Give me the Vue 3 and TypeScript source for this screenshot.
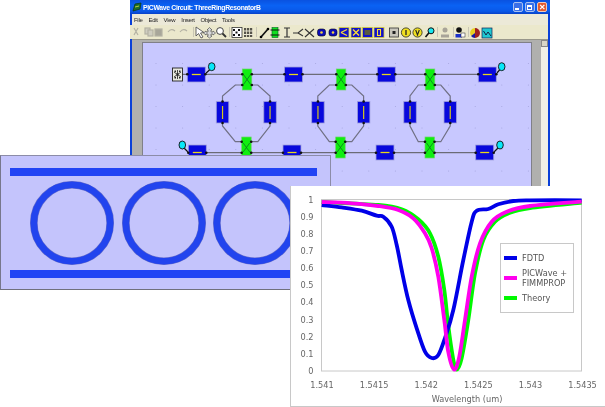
<template>
  <div class="scene">
    <!-- schematic editor window -->
    <section class="window">
      <header class="titlebar">
        <svg class="app-icon" viewBox="0 0 10 10" width="10" height="10">
          <path d="M1 9 L3 2 L9 1 L8 7 Z" fill="#1c6b2c" stroke="#0b3a18" stroke-width=".8" />
          <path d="M3 5 L7 4" stroke="#b8d040" stroke-width="1" />
        </svg>
        <span class="title">PICWave Circuit: ThreeRingResonatorB</span>
        <span class="caption-btns">
          <i class="cap"><b class="cap-min"></b></i>
          <i class="cap"><b class="cap-max"></b></i>
          <i class="cap close">
            <svg viewBox="0 0 10 10" width="10" height="10"><path d="M2.5 2.5 L7.5 7.5 M7.5 2.5 L2.5 7.5" stroke="#fff" stroke-width="1.5" /></svg>
          </i>
        </span>
      </header>
      <nav class="menubar">
        <span v-for="m in menus" :key="m" class="menu-item">{{ m }}</span>
      </nav>
      <div class="toolbar">
        <svg viewBox="130 24 420 14" width="420" height="14">
          <g fill="none" stroke="#b4b2a4" stroke-width="1.2">
            <path d="M134 27 L138 34 M138 27 L134 34" />
            <rect x="145" y="27" width="5" height="6" fill="#cfcdc0" />
            <rect x="148" y="29" width="5" height="6" fill="#cfcdc0" />
            <rect x="155" y="28" width="7" height="7" fill="#a8a69a" />
            <path d="M168 31 Q171 27 175 30 M187 30 Q183 27 180 31" />
          </g>
          <g stroke="#c9c6b4" stroke-width="1">
            <path d="M193.500 26 V36 M229.500 26 V36 M256.500 26 V36 M437.500 26 V36 M453.500 26 V36 M468.500 26 V36" />
          </g>
          <path d="M196 26 L196 35 L198.500 32.500 L201 37 L203 36 L200.500 32 L204 31.500 Z" fill="#fff" stroke="#555" stroke-width=".9" />
          <path d="M209.500 26.500 L212 29 H211 V31 H213 V30 L215.500 32 L213 34 V33 H211 V35 H212 L209.500 37 L207 35 H208 V33 H206 V34 L203.500 32 L206 30 V31 H208 V29 H207 Z" fill="#d8d8d8" stroke="#555" stroke-width=".7" />
          <circle cx="220" cy="30" r="3.400" fill="#fff" stroke="#444" />
          <path d="M222.500 32.500 L226 36" stroke="#333" stroke-width="1.800" />
          <rect x="232" y="26.500" width="10" height="10" fill="#fff" stroke="#333" stroke-width=".8" />
          <path d="M233 28 h2 v2 h-2z M238 28 h2 v2 h-2z M235.500 30.500 h2 v2 h-2z M233 33 h2 v2 h-2z M238 33 h2 v2 h-2z" fill="#111" />
          <g fill="#55534a">
            <rect x="244" y="27" width="2.200" height="9" />
            <rect x="247" y="27" width="2.200" height="9" />
            <rect x="250" y="27" width="2.200" height="9" />
            <rect x="244" y="29.500" width="9" height="1" fill="#ece9d8" />
            <rect x="244" y="33" width="9" height="1" fill="#ece9d8" />
          </g>
          <path d="M261 36 L268 28" stroke="#111" stroke-width="1.600" />
          <circle cx="261" cy="36" r="1.300" /><circle cx="268" cy="28" r="1.300" />
          <rect x="272" y="26.500" width="6" height="10" fill="#10e020" stroke="#062" stroke-width=".6" />
          <path d="M270.500 29 h9 M270.500 34 h9" stroke="#111" />
          <path d="M284 27 H290 M287 27 V36 M284 36 H290" stroke="#333" stroke-width="1.200" fill="none" />
          <path d="M293 32 H298 L303 28 M298 32 L303 35" stroke="#333" stroke-width="1.100" fill="none" />
          <path d="M305 28 L314 36 M314 28 L305 36" stroke="#333" stroke-width="1.100" />
          <g v-for="x in [321.500, 333]" :key="x">
            <rect :x="x - 4" y="28" width="8" height="7" rx="2.500" fill="#0c0cb8" stroke="#001" stroke-width=".6" />
            <circle :cx="x" cy="31.500" r="1.300" fill="#f2d040" />
          </g>
          <g v-for="(x, i) in [344, 356, 367.500, 379]" :key="x">
            <rect :x="x - 5" y="26.500" width="10" height="10" fill="#1212c8" stroke="#d8d038" stroke-width=".8" />
            <path v-if="i === 0" :d="`M${x - 3} 31.500 L${x + 3} 28.500 M${x - 3} 31.500 L${x + 3} 34.500`" stroke="#ffe030" stroke-width="1.300" />
            <path v-if="i === 1" :d="`M${x - 3} 28.500 L${x + 3} 34.500 M${x + 3} 28.500 L${x - 3} 34.500`" stroke="#ffe030" stroke-width="1.300" />
            <rect v-if="i === 2" :x="x - 3" y="29" width="6" height="5" fill="#5a5a40" />
            <rect v-if="i === 3" :x="x - 1.500" y="28.500" width="3" height="6" fill="none" stroke="#ffe030" stroke-width="1.100" />
          </g>
          <rect x="389.500" y="27" width="9" height="9" fill="#c8c6bc" stroke="#333" stroke-width=".8" />
          <rect x="392.500" y="30" width="3" height="3" fill="#222" />
          <g v-for="(x, i) in [406, 417.500]" :key="x">
            <circle :cx="x" cy="31.500" r="4.600" fill="#f0e020" stroke="#222" stroke-width=".8" />
            <path v-if="i === 0" :d="`M${x} 29 V34`" stroke="#222" stroke-width="1.300" />
            <path v-else :d="`M${x - 1.800} 29 L${x} 34 L${x + 1.800} 29`" stroke="#222" stroke-width="1.100" fill="none" />
          </g>
          <circle cx="431" cy="29.800" r="3" fill="#18e8f0" stroke="#111" />
          <path d="M428.800 32 L425.500 36" stroke="#111" stroke-width="1.600" />
          <circle cx="445" cy="29" r="2.500" fill="#a8a498" />
          <path d="M441 36.500 V33.500 H449 V36.500 Z" fill="#a8a498" />
          <circle cx="459" cy="29" r="2.800" fill="#111" />
          <path d="M455.500 36.500 V33 H462 V36.500 Z" fill="#1a30c8" />
          <rect x="461" y="32" width="4" height="4" fill="#fff" stroke="#222" stroke-width=".5" />
          <path d="M475 27 A5 5 0 0 1 475 37 Z" fill="#a02020" />
          <path d="M475 27 A5 5 0 0 0 471 35 L475 32 Z" fill="#e8d020" />
          <path d="M475 37 A5 5 0 0 1 471 35 L475 32 Z" fill="#1818a0" />
          <rect x="482" y="27" width="10" height="10" fill="#20c8d0" stroke="#125" stroke-width=".7" />
          <path d="M483.500 30 L486 34 L488 31 L491 35" stroke="#124" fill="none" />
        </svg>
      </div>
      <div class="workspace">
        <div class="canvas-frame">
          <svg class="schematic" viewBox="143 42 388 150" width="388" height="150">
            <circle v-for="(d, i) in gridDots" :key="'g' + i" :cx="d.x" :cy="d.y" r=".5" fill="#a2a2da" />
            <g fill="none" stroke="#555" stroke-width="1">
              <path d="M182 73.300 H478.500" />
              <path d="M205 151.700 H476" />
            </g>
            <g fill="none" stroke="#707084" stroke-width="1.200">
              <path v-for="(r, i) in ringPaths" :key="'r' + i" :d="r" />
            </g>
            <path d="M205 73 L210 68.500 M496 73 L500 68.500 M188 151 L184 147 M494 151 L498 147" stroke="#111" stroke-width="1.200" />
            <g>
              <rect x="172.500" y="67" width="10" height="13" fill="#e8e8e0" stroke="#222" stroke-width=".9" />
              <path d="M177.500 69 V78 M174 71 L181 76 M181 71 L174 76" stroke="#444" stroke-width="1" />
              <path d="M174.500 69.500 h1.500 v1.500 h-1.500z M179 69.500 h1.500 v1.500 h-1.500z M176.500 72.500 h2 v2 h-2z M174.500 76 h1.500 v1.500 h-1.500z M179 76 h1.500 v1.500 h-1.500z" fill="#222" />
            </g>
            <g v-for="(b, i) in hBoxes" :key="'h' + i">
              <rect :x="b.x" :y="b.y" width="18" height="15" fill="#0808dc" stroke="#a0a0dc" stroke-width=".8" />
              <path :d="`M${b.x + 4.5} ${b.y + 7.500} H${b.x + 13.5}`" stroke="#e8d818" stroke-width="1.300" />
              <circle :cx="b.x" :cy="b.wire" r="1.300" fill="#111" />
              <circle :cx="b.x + 18" :cy="b.wire" r="1.300" fill="#111" />
            </g>
            <g v-for="(b, i) in vBoxes" :key="'v' + i">
              <rect :x="b" y="100.500" width="12.500" height="21.500" fill="#0808dc" stroke="#a0a0dc" stroke-width=".8" />
              <path :d="`M${b + 6.250} 105 V118`" stroke="#d8c818" stroke-width="1.200" />
              <circle :cx="b + 6.250" cy="100.500" r="1.300" fill="#111" />
              <circle :cx="b + 6.250" cy="122" r="1.300" fill="#111" />
            </g>
            <g v-for="(c, i) in couplers" :key="'c' + i">
              <rect :x="c.x" :y="c.y" width="9.500" height="21" fill="#10ee10" stroke="#70d070" stroke-width=".7" />
              <path :d="`M${c.x + 1.500} ${c.y + 6} L${c.x + 8} ${c.y + 15} M${c.x + 8} ${c.y + 6} L${c.x + 1.500} ${c.y + 15}`" stroke="#0a7a20" stroke-width=".8" />
              <circle v-for="d in c.dots" :key="d.x + '-' + d.y" :cx="d.x" :cy="d.y" r="1.300" fill="#111" />
            </g>
            <ellipse v-for="(o, i) in bulbs" :key="'o' + i" :cx="o.x" :cy="o.y" rx="3.300" ry="4" fill="#08e8f8" stroke="#111" stroke-width=".9" />
          </svg>
        </div>
        <div class="scrollbar"><span class="scroll-btn"></span></div>
      </div>
    </section>

    <!-- ring layout -->
    <section class="rings">
      <div class="rail"></div>
      <div class="ring-row">
        <svg v-for="n in 3" :key="n" class="ring" viewBox="0 0 84 84" width="84" height="84">
          <circle cx="42" cy="42" r="38.200" fill="none" stroke="#6a70c8" stroke-width="7.600" />
          <circle cx="42" cy="42" r="38.200" fill="none" stroke="#2244ee" stroke-width="6.600" />
        </svg>
      </div>
      <div class="rail"></div>
    </section>

    <!-- spectrum chart -->
    <section class="chart">
      <svg viewBox="290 186 315 221" width="315" height="221">
        <rect x="321.500" y="199.500" width="260" height="171.500" fill="#fff" stroke="#c8c8c8" />
        <g class="axis-text">
          <text v-for="t in yTicks" :key="t.label" x="313.500" :y="t.y + 3" text-anchor="end">{{ t.label }}</text>
          <text v-for="t in xTicks" :key="t.label" :x="t.x" y="388" text-anchor="middle">{{ t.label }}</text>
          <text x="467" y="402" text-anchor="middle">Wavelength (um)</text>
        </g>
        <g fill="none" stroke-width="3.800" stroke-linejoin="round">
          <path :d="theoryPath" stroke="#00f800" />
          <path :d="fdtdPath" stroke="#0000e8" />
          <path :d="picPath" stroke="#ff00ee" />
        </g>
      </svg>
      <div class="legend">
        <div class="legend-row"><i class="swatch blue"></i><span>FDTD</span></div>
        <div class="legend-row"><i class="swatch pink"></i><span>PICWave +<br />FIMMPROP</span></div>
        <div class="legend-row"><i class="swatch green"></i><span>Theory</span></div>
      </div>
    </section>
  </div>
</template>

<script setup lang="ts">
type Pt = [number, number]

const menus = ['File', 'Edit', 'View', 'Insert', 'Object', 'Tools']

// smooth line through hand-read curve points
const smooth = (p: Pt[]): string => {
  let d = `M${p[0][0]} ${p[0][1]}`
  for (let i = 0; i < p.length - 1; i++) {
    const a = p[Math.max(i - 1, 0)]
    const b = p[i]
    const c = p[i + 1]
    const e = p[Math.min(i + 2, p.length - 1)]
    const c1x = b[0] + (c[0] - a[0]) / 6
    const c1y = b[1] + (c[1] - a[1]) / 6
    const c2x = c[0] - (e[0] - b[0]) / 6
    const c2y = c[1] - (e[1] - b[1]) / 6
    d += ` C${c1x.toFixed(1)} ${c1y.toFixed(1)} ${c2x.toFixed(1)} ${c2y.toFixed(1)} ${c[0]} ${c[1]}`
  }
  return d
}

const fdtdPath = smooth([
  [321.7, 205], [341.7, 207.3], [361.7, 210.7], [376.7, 215.7], [383.3, 216.7], [391.7, 226.7],
  [396.7, 245], [401.7, 270], [408.3, 300], [416.7, 328.3], [425, 351.7], [431.7, 358],
  [438.3, 355], [445, 338], [453.3, 310], [463.3, 260], [471.7, 221.7], [476.7, 210.7],
  [488.3, 209], [498.3, 204.3], [513.3, 201], [530, 200.3], [581.7, 200.3],
])

const picPath = smooth([
  [321.7, 202], [351.7, 203.3], [378.3, 206], [398.3, 210], [413.3, 218.3], [425, 233.3],
  [431.7, 248.3], [438.3, 276.7], [444.3, 320], [448.3, 352], [454, 369.5], [459.3, 356.7],
  [465, 320], [471.7, 276.7], [480, 243.3], [491.7, 221.7], [506.7, 211.7], [530, 206], [581.7, 201.7],
])

const theoryPath = smooth([
  [321.7, 202], [378.3, 205], [401.7, 209.3], [418.3, 219.3], [430, 233.3], [438.3, 256.7],
  [444.3, 290], [448, 323.3], [453, 358], [456.7, 369.5], [461.7, 358], [468.3, 320],
  [475, 273.3], [483.3, 240], [495, 221.7], [510, 212.7], [530, 208], [581.7, 202.7],
])

const yTicks = Array.from({ length: 11 }, (_, i) => ({
  label: i === 0 ? '0' : i === 10 ? '1' : (i / 10).toFixed(1),
  y: 371 - i * 17.15,
}))

const xTicks = ['1.541', '1.5415', '1.542', '1.5425', '1.543', '1.5435'].map((label, i) => ({
  label,
  x: 322 + i * 52.1,
}))

const hBoxes = [
  { x: 187.3, y: 66, wire: 73.3 }, { x: 284.5, y: 66, wire: 73.3 },
  { x: 377.3, y: 66, wire: 73.3 }, { x: 478.3, y: 66, wire: 73.3 },
  { x: 188.3, y: 144, wire: 151.7 }, { x: 283, y: 144, wire: 151.7 },
  { x: 376, y: 144, wire: 151.7 }, { x: 475.7, y: 144, wire: 151.7 },
]

const vBoxes = [216.3, 263.8, 311.7, 357.4, 403.8, 444]

const makeCoupler = (x: number, y: number, wireTop: boolean) => ({
  x,
  y,
  dots: wireTop
    ? [{ x, y: 73.3 }, { x: x + 9.5, y: 73.3 }, { x, y: 84 }, { x: x + 9.5, y: 84 }]
    : [{ x, y: 140.7 }, { x: x + 9.5, y: 140.7 }, { x, y: 151.7 }, { x: x + 9.5, y: 151.7 }],
})

const couplers = [
  makeCoupler(242.3, 68, true), makeCoupler(336.3, 68, true), makeCoupler(425.3, 68, true),
  makeCoupler(241.7, 136, false), makeCoupler(335.7, 136, false), makeCoupler(425, 136, false),
]

// octagon of each ring, between its top and bottom coupler
const ringPaths = [
  [242.3, 251.8, 222.5, 270],
  [336.3, 345.8, 317.8, 363.6],
  [425.3, 434.8, 410, 450.2],
].flatMap(([l, r, a, b]) => [
  `M${l} 84 H${l - 7} L${a} 95 V100 M${r} 84 H${r + 6} L${b} 95 V100`,
  `M${a} 122 V125 L${l - 7} 140.7 H${l} M${b} 122 V125 L${r + 6} 140.7 H${r}`,
])

const bulbs = [
  { x: 211.7, y: 65.7 }, { x: 501.7, y: 65.7 },
  { x: 182.3, y: 144 }, { x: 500, y: 144 },
]

const gridDots: { x: number; y: number }[] = []
for (let x = 156; x < 531; x += 26.6) {
  for (let y = 62.5; y < 190; y += 21.5) {
    gridDots.push({ x, y })
  }
}
</script>

<style>
html,
body {
  background: #fff;
}
</style>

<style scoped>
.scene {
  position: relative;
  width: 605px;
  height: 407px;
  overflow: hidden;
  background: #fff;
  font-family: 'DejaVu Sans', sans-serif;
}

/* windows on the desktop */
.window {
  position: absolute;
  left: 130px;
  top: 0;
  width: 420px;
  height: 190px;
  display: flex;
  flex-direction: column;
  box-sizing: border-box;
  border-left: 2px solid #0a40d8;
  border-right: 2px solid #0a40d8;
  background: #ece9d8;
  filter: blur(0.3px);
}

.titlebar {
  height: 14px;
  margin: 0 -2px;
  padding: 0 3px 0 2px;
  display: flex;
  align-items: center;
  gap: 1px;
  background: linear-gradient(#0a52e0, #0a62f4 40%, #0a58e8 80%, #0840c8);
  flex: none;
}

.title {
  font-family: 'Liberation Sans', sans-serif;
  font-size: 6.8px;
  font-weight: 700;
  letter-spacing: -0.3px;
  color: #fff;
  flex: 1;
}

.caption-btns {
  display: flex;
  gap: 1.5px;
}

.cap {
  width: 10.5px;
  height: 10px;
  box-sizing: border-box;
  border: 1px solid #a8c0f0;
  border-radius: 2px;
  background: #3a70e8;
  display: flex;
  align-items: center;
  justify-content: center;
}

.cap.close {
  background: #e05a30;
  border-color: #f0c8b8;
}

.cap-min {
  width: 4px;
  height: 1.5px;
  margin: 4px 2px 0 0;
  background: #fff;
}

.cap-max {
  width: 5px;
  height: 5px;
  box-sizing: border-box;
  border: 1px solid #fff;
  border-top-width: 2px;
}

.menubar {
  height: 11px;
  padding: 0 0 0 2px;
  display: flex;
  align-items: center;
  flex: none;
  gap: 6px;
  font-family: 'Liberation Sans', sans-serif;
  font-size: 6px;
  letter-spacing: -0.3px;
  color: #222;
}

.toolbar {
  height: 14px;
  flex: none;
  background: #ebe8cc;
  margin-left: -2px;
}

.toolbar svg {
  display: block;
}

.workspace {
  flex: 1;
  display: flex;
  min-height: 0;
  border-top: 1px solid #98968a;
}

.canvas-frame {
  flex: 1;
  background: #b0b0ae;
  padding: 3px 9px 0 11px;
  overflow: hidden;
}

.schematic {
  display: block;
  background: #c8c8ff;
  outline: 1px solid #808088;
}

.scrollbar {
  width: 7px;
  background: #f0f0e6;
  flex: none;
}

.scroll-btn {
  display: block;
  height: 7px;
  background: #d8d6c8;
  border: 1px solid #888;
  box-sizing: border-box;
}

.rings {
  position: absolute;
  left: 0;
  top: 155px;
  width: 331px;
  height: 135px;
  box-sizing: border-box;
  padding: 12px 13px 11px 9px;
  display: flex;
  flex-direction: column;
  justify-content: space-between;
  background: #c4c4fc;
  border: 1px solid #8c8ca8;
  border-left-color: #77778c;
  border-bottom-color: #70707c;
}

.rail {
  height: 8px;
  background: #2244f4;
}

.ring-row {
  display: flex;
  gap: 7.6px;
  padding-left: 20px;
}

.ring {
  display: block;
  flex: none;
}

.chart {
  position: absolute;
  left: 290px;
  top: 186px;
  width: 315px;
  height: 221px;
  background: #fff;
  box-sizing: border-box;
  box-shadow: inset 1px 0 0 #c8c8c8, inset 0 -1px 0 #c8c8c8;
  filter: blur(0.25px);
}

.chart svg {
  display: block;
}

.axis-text {
  font-size: 8.2px;
  fill: #666;
}

.legend {
  position: absolute;
  left: 210px;
  top: 57px;
  width: 74px;
  height: 70px;
  box-sizing: border-box;
  border: 1px solid #c8c8c8;
  background: #fff;
  padding: 9px 0 0 3px;
  display: flex;
  flex-direction: column;
  gap: 5px;
  font-size: 8.2px;
  line-height: 10px;
  color: #555;
}

.legend-row {
  display: flex;
  align-items: center;
  gap: 5px;
}

.swatch {
  width: 13px;
  height: 3.5px;
  flex: none;
}

.blue {
  background: #0000e8;
}

.pink {
  background: #ff00ee;
}

.green {
  background: #00f800;
}
</style>
